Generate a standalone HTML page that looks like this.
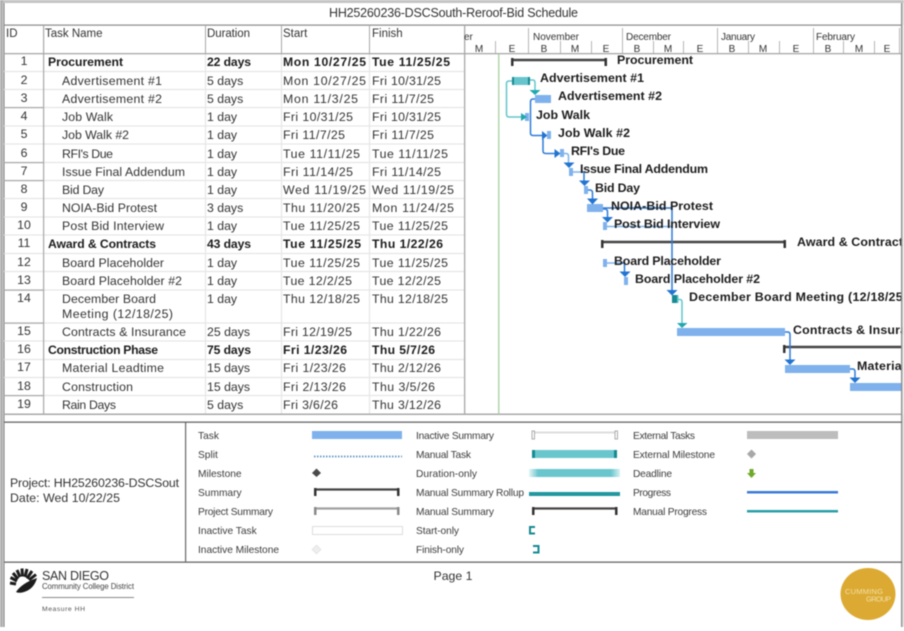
<!DOCTYPE html>
<html><head><meta charset="utf-8"><style>
html,body{margin:0;padding:0;background:#fff;width:904px;height:631px;overflow:hidden}
svg{position:absolute;left:0;top:0;filter:blur(.45px)}
text{font-family:"Liberation Sans",sans-serif;font-size:12.3px;fill:#333}
.b{font-weight:bold;fill:#1c1c1c;font-size:12.2px}
.l{font-weight:bold;fill:#1c1c1c;font-size:12.4px}
.h{font-size:11.5px}
.g{font-size:10.2px;fill:#3c3c3c}
.m{font-size:10px}
.c{text-anchor:middle}
.t{fill:none;stroke:#2f7bd8;stroke-width:1.5}
.t2{fill:none;stroke:#63c5cc;stroke-width:1.5}
.lb{fill:none;stroke:#7fb2ec;stroke-width:1.5}
.bar{fill:#7fb2ec}
.ar{fill:#2274d2}
.ar2{fill:#21a8ae}
.s{stroke:#444;stroke-width:2.5}
.cap{fill:#333}
.gl{stroke:#e6e6e6;stroke-width:1.2}
</style></head><body>
<svg width="904" height="631" viewBox="0 0 904 631" xmlns="http://www.w3.org/2000/svg">
<!-- outer -->
<rect x="0" y="0" width="904" height="3" fill="#c4c4c4"/>
<rect x="0" y="0" width="3" height="627" fill="#b0b0b0"/>
<rect x="3.5" y="3" width="1" height="624" fill="#777"/>
<rect x="901" y="3" width="1.3" height="624" fill="#888"/>
<rect x="902.3" y="3" width="1.7" height="624" fill="#d8d8d8"/>
<text x="329" y="17" style="font-size:12.5px" textLength="249">HH25260236-DSCSouth-Reroof-Bid Schedule</text>
<rect x="4" y="24.5" width="898" height="1.2" fill="#8a8a8a"/>
<!-- table grid -->
<g class="gl">
<line x1="4" x2="464" y1="71.5" y2="71.5"/><line x1="4" x2="464" y1="89.5" y2="89.5"/><line x1="4" x2="464" y1="107.5" y2="107.5"/>
<line x1="4" x2="464" y1="126" y2="126"/><line x1="4" x2="464" y1="144" y2="144"/><line x1="4" x2="464" y1="162.5" y2="162.5"/>
<line x1="4" x2="464" y1="180.5" y2="180.5"/><line x1="4" x2="464" y1="198.5" y2="198.5"/><line x1="4" x2="464" y1="217" y2="217"/>
<line x1="4" x2="464" y1="235" y2="235"/><line x1="4" x2="464" y1="253.5" y2="253.5"/><line x1="4" x2="464" y1="271.5" y2="271.5"/>
<line x1="4" x2="464" y1="290" y2="290"/><line x1="4" x2="464" y1="323" y2="323"/><line x1="4" x2="464" y1="341" y2="341"/>
<line x1="4" x2="464" y1="359.5" y2="359.5"/><line x1="4" x2="464" y1="377.5" y2="377.5"/><line x1="4" x2="464" y1="395.5" y2="395.5"/>
<line x1="205.5" x2="205.5" y1="53" y2="414"/><line x1="281.5" x2="281.5" y1="53" y2="414"/><line x1="369.5" x2="369.5" y1="53" y2="414"/>
</g>
<g fill="#a8a8a8">
<rect x="4" y="53" width="898" height="1.3"/>
<rect x="4" y="107" width="39" height="1.2"/><rect x="4" y="162" width="39" height="1.2"/><rect x="4" y="180" width="39" height="1.2"/><rect x="4" y="289.5" width="39" height="1.2"/><rect x="4" y="322.5" width="39" height="1.2"/><rect x="4" y="395" width="39" height="1.2"/>
<rect x="43" y="25" width="1.2" height="389"/>
<rect x="205" y="25" width="1" height="28"/><rect x="281" y="25" width="1" height="28"/><rect x="369" y="25" width="1" height="28"/>
<rect x="464" y="25" width="1.3" height="389"/>
<rect x="4" y="413.5" width="898" height="1.5"/>
</g>
<text x="6" y="37" class="h">ID</text><text x="45" y="37" class="h">Task Name</text><text x="207" y="37" class="h" textLength="43">Duration</text><text x="283" y="37" class="h">Start</text><text x="372" y="37" class="h">Finish</text>

<g>
<text class="c" x="24" y="65">1</text><text class="c" x="24" y="84">2</text><text class="c" x="24" y="102">3</text><text class="c" x="24" y="120">4</text><text class="c" x="24" y="138">5</text><text class="c" x="24" y="157">6</text><text class="c" x="24" y="175">7</text><text class="c" x="24" y="193">8</text><text class="c" x="24" y="211">9</text><text class="c" x="24" y="229">10</text><text class="c" x="24" y="247">11</text><text class="c" x="24" y="266">12</text><text class="c" x="24" y="284">13</text><text class="c" x="24" y="302">14</text><text class="c" x="24" y="335">15</text><text class="c" x="24" y="353">16</text><text class="c" x="24" y="371">17</text><text class="c" x="24" y="390">18</text><text class="c" x="24" y="408">19</text>
</g>
<text x="48" y="66" class="b" textLength="75">Procurement</text><text x="207" y="66" class="b" textLength="44">22 days</text><text x="283" y="66" class="b" textLength="83">Mon 10/27/25</text><text x="372" y="66" class="b" textLength="78">Tue 11/25/25</text>
<text x="62" y="85" textLength="100">Advertisement #1</text><text x="207" y="85">5 days</text><text x="283" y="85" textLength="83">Mon 10/27/25</text><text x="372" y="85" textLength="69">Fri 10/31/25</text>
<text x="62" y="103" textLength="100">Advertisement #2</text><text x="207" y="103">5 days</text><text x="283" y="103" textLength="75">Mon 11/3/25</text><text x="372" y="103" textLength="62">Fri 11/7/25</text>
<text x="62" y="121" textLength="51">Job Walk</text><text x="207" y="121">1 day</text><text x="283" y="121" textLength="70">Fri 10/31/25</text><text x="372" y="121" textLength="69">Fri 10/31/25</text>
<text x="62" y="139" textLength="67">Job Walk #2</text><text x="207" y="139">1 day</text><text x="283" y="139" textLength="62">Fri 11/7/25</text><text x="372" y="139" textLength="62">Fri 11/7/25</text>
<text x="62" y="158" textLength="51">RFI's Due</text><text x="207" y="158">1 day</text><text x="283" y="158" textLength="77">Tue 11/11/25</text><text x="372" y="158" textLength="76">Tue 11/11/25</text>
<text x="62" y="176" textLength="123">Issue Final Addendum</text><text x="207" y="176">1 day</text><text x="283" y="176" textLength="70">Fri 11/14/25</text><text x="372" y="176" textLength="69">Fri 11/14/25</text>
<text x="62" y="194" textLength="42">Bid Day</text><text x="207" y="194">1 day</text><text x="283" y="194" textLength="83">Wed 11/19/25</text><text x="372" y="194" textLength="82">Wed 11/19/25</text>
<text x="62" y="212" textLength="95">NOIA-Bid Protest</text><text x="207" y="212">3 days</text><text x="283" y="212" textLength="77">Thu 11/20/25</text><text x="372" y="212" textLength="82">Mon 11/24/25</text>
<text x="62" y="230" textLength="102">Post Bid Interview</text><text x="207" y="230">1 day</text><text x="283" y="230" textLength="77">Tue 11/25/25</text><text x="372" y="230" textLength="76">Tue 11/25/25</text>
<text x="48" y="248" class="b" textLength="108">Award &amp; Contracts</text><text x="207" y="248" class="b" textLength="44">43 days</text><text x="283" y="248" class="b" textLength="78">Tue 11/25/25</text><text x="372" y="248" class="b" textLength="71">Thu 1/22/26</text>
<text x="62" y="267" textLength="102">Board Placeholder</text><text x="207" y="267">1 day</text><text x="283" y="267" textLength="77">Tue 11/25/25</text><text x="372" y="267" textLength="76">Tue 11/25/25</text>
<text x="62" y="285" textLength="120">Board Placeholder #2</text><text x="207" y="285">1 day</text><text x="283" y="285" textLength="69">Tue 12/2/25</text><text x="372" y="285" textLength="69">Tue 12/2/25</text>
<text x="62" y="303" textLength="94">December Board</text><text x="207" y="303">1 day</text><text x="283" y="303" textLength="77">Thu 12/18/25</text><text x="372" y="303" textLength="76">Thu 12/18/25</text>
<text x="62" y="318" textLength="111">Meeting (12/18/25)</text>
<text x="62" y="336" textLength="124">Contracts &amp; Insurance</text><text x="207" y="336">25 days</text><text x="283" y="336" textLength="69">Fri 12/19/25</text><text x="372" y="336" textLength="69">Thu 1/22/26</text>
<text x="48" y="354" class="b" textLength="110">Construction Phase</text><text x="207" y="354" class="b" textLength="44">75 days</text><text x="283" y="354" class="b" textLength="64">Fri 1/23/26</text><text x="372" y="354" class="b" textLength="63">Thu 5/7/26</text>
<text x="62" y="372" textLength="102">Material Leadtime</text><text x="207" y="372">15 days</text><text x="283" y="372" textLength="63">Fri 1/23/26</text><text x="372" y="372" textLength="69">Thu 2/12/26</text>
<text x="62" y="391" textLength="71">Construction</text><text x="207" y="391">15 days</text><text x="283" y="391" textLength="63">Fri 2/13/26</text><text x="372" y="391" textLength="63">Thu 3/5/26</text>
<text x="62" y="409" textLength="54">Rain Days</text><text x="207" y="409">5 days</text><text x="283" y="409" textLength="55">Fri 3/6/26</text><text x="372" y="409" textLength="69">Thu 3/12/26</text>

<!-- timescale -->
<g fill="#b5b5b5">
<rect x="528" y="28" width="1" height="25"/><rect x="622" y="28" width="1" height="25"/><rect x="717" y="28" width="1" height="25"/><rect x="813" y="28" width="1" height="25"/><rect x="899" y="28" width="1" height="25"/>
<rect x="495" y="41" width="1" height="12"/><rect x="560" y="41" width="1" height="12"/><rect x="591" y="41" width="1" height="12"/><rect x="653" y="41" width="1" height="12"/><rect x="683" y="41" width="1" height="12"/><rect x="748" y="41" width="1" height="12"/><rect x="779" y="41" width="1" height="12"/><rect x="843" y="41" width="1" height="12"/><rect x="874" y="41" width="1" height="12"/>
</g>
<text x="464" y="40" class="m">er</text><text x="533" y="40" class="m" textLength="46">November</text><text x="626" y="40" class="m" textLength="45">December</text><text x="721" y="40" class="m" textLength="34">January</text><text x="816" y="40" class="m" textLength="39">February</text>
<text x="479" y="52" class="m c">M</text><text x="512" y="52" class="m c">E</text><text x="544" y="52" class="m c">B</text><text x="575" y="52" class="m c">M</text><text x="606" y="52" class="m c">E</text><text x="637" y="52" class="m c">B</text><text x="668" y="52" class="m c">M</text><text x="700" y="52" class="m c">E</text><text x="732" y="52" class="m c">B</text><text x="763" y="52" class="m c">M</text><text x="796" y="52" class="m c">E</text><text x="828" y="52" class="m c">B</text><text x="859" y="52" class="m c">M</text><text x="887" y="52" class="m c">E</text>
<rect x="498" y="54" width="1.5" height="360" fill="#b2d6ac"/>

<!-- bars -->
<rect x="535" y="95" width="16" height="8" class="bar"/>
<rect x="525" y="113" width="4" height="8" class="bar"/>
<rect x="547" y="131" width="4" height="8" class="bar"/>
<rect x="560" y="149" width="4" height="8" class="bar"/>
<rect x="569" y="168" width="4" height="8" class="bar"/>
<rect x="584" y="186" width="4" height="8" class="bar"/>
<rect x="587" y="204" width="16" height="8" class="bar"/>
<rect x="603" y="222" width="4" height="8" class="bar"/>
<rect x="603" y="259" width="4" height="8" class="bar"/>
<rect x="624" y="277" width="4" height="8" class="bar"/>
<rect x="677" y="328" width="108" height="8" class="bar"/>
<rect x="785" y="365" width="65" height="8" class="bar"/>
<rect x="850" y="383" width="51" height="8" class="bar"/>
<rect x="512" y="77" width="18" height="8" fill="#66c5cc"/><rect x="512" y="77" width="2" height="8" fill="#178a92"/><rect x="528" y="77" width="2" height="8" fill="#178a92"/>
<rect x="672" y="295" width="6" height="8" fill="#178a92"/><rect x="677" y="295" width="1.5" height="8" fill="#66c5cc"/>
<!-- summaries -->
<line x1="512" x2="606" y1="60" y2="60" class="s"/><rect x="511" y="58" width="2.5" height="8" class="cap"/><rect x="604.5" y="58" width="2.5" height="8" class="cap"/>
<line x1="602" x2="785" y1="242" y2="242" class="s"/><rect x="601" y="240" width="2.5" height="8" class="cap"/><rect x="783.5" y="240" width="2.5" height="8" class="cap"/>
<line x1="784" x2="901" y1="347" y2="347" class="s"/><rect x="783" y="345" width="2.5" height="8" class="cap"/>
<!-- connectors -->
<path class="t2" d="M512 81H509Q506.500 81 506.500 83.500V114Q506.500 117 509 117H522"/>
<path class="ar2" d="M521 113L527 117L521 121Z"/>
<path class="t2" d="M530 80H533Q535 80 535 83V91"/>
<path class="ar2" d="M529.500 90H540.500L535 95Z"/>
<path class="t" d="M535 99H533Q530.500 99 530.500 102V133Q530.500 135.500 533 135.500H542"/>
<path class="ar" d="M542 131L547.500 135.500L542 140Z"/>
<path class="t" d="M543 139V151Q543 153.500 546 153.500H555"/>
<path class="ar" d="M554.500 149L560.500 153.500L554.500 158Z"/>
<path class="lb" d="M564 153.500H566Q568.500 153.500 568.500 156V164"/>
<path class="ar" d="M563.500 162.500H574.500L569 168Z"/>
<path class="lb" d="M573 172H582"/><path class="t" d="M582 172H584V182"/>
<path class="ar" d="M579 180.500H590L584.500 186Z"/>
<path class="t" d="M588 190H590Q592.500 190 592.500 193V200"/>
<path class="ar" d="M587 198.500H598L592.500 204.500Z"/>
<path class="t" d="M603 208H672V292"/>
<path class="ar" d="M666.500 290H677.500L672 295.500Z"/>
<path class="t" d="M603 209H605Q607.500 209 607.500 212V219"/>
<path class="ar" d="M602 217H613L607.500 222.500Z"/>
<path class="lb" d="M607 226.500H671"/>
<path class="lb" d="M607 263H621"/><path class="t" d="M621 263H624.500V273"/>
<path class="ar" d="M619.500 271.500H630.500L625 277Z"/>
<path class="t2" d="M678 299.500H680Q682 299.500 682 302V324"/>
<path class="ar2" d="M677 323H687.500L682 328Z"/>
<path class="t" d="M785 332H788Q790 332 790 335V361"/>
<path class="ar" d="M784.500 359.500H795.500L790 365Z"/>
<path class="t" d="M850 369H853Q855 369 855 372V379"/>
<path class="ar" d="M849.500 377.500H860.500L855 383Z"/>
<!-- bar labels -->
<text x="617" y="64" class="l" textLength="76">Procurement</text>
<text x="540" y="82" class="l" textLength="104">Advertisement #1</text>
<text x="558" y="100" class="l" textLength="104">Advertisement #2</text>
<text x="536" y="119" class="l" textLength="54">Job Walk</text>
<text x="558" y="137" class="l" textLength="72">Job Walk #2</text>
<text x="571" y="155" class="l" textLength="54">RFI's Due</text>
<text x="580" y="173" class="l" textLength="128">Issue Final Addendum</text>
<text x="595" y="192" class="l" textLength="45">Bid Day</text>
<text x="611" y="210" class="l" textLength="102">NOIA-Bid Protest</text>
<text x="614" y="228" class="l" textLength="106">Post Bid Interview</text>
<text x="797" y="246" class="l" textLength="113">Award &amp; Contracts</text>
<text x="614" y="265" class="l" textLength="107">Board Placeholder</text>
<text x="635" y="283" class="l" textLength="125">Board Placeholder #2</text>
<text x="689" y="301" class="l" textLength="218">December Board Meeting (12/18/25)</text>
<text x="793" y="334" class="l" textLength="136">Contracts &amp; Insurance</text>
<text x="857" y="370" class="l" textLength="108">Material Leadtime</text>
<rect x="901" y="25" width="1.3" height="390" fill="#888"/><rect x="902.300" y="25" width="1.700" height="390" fill="#e2e2e2"/>

<!-- legend -->
<rect x="4" y="421.500" width="898" height="1.300" fill="#666"/>
<rect x="4" y="561.500" width="898" height="1.300" fill="#666"/>
<rect x="185" y="422" width="1.200" height="140" fill="#666"/>
<text x="10" y="487" style="font-size:12.300px" textLength="169">Project: HH25260236-DSCSout</text>
<text x="10" y="502" style="font-size:12.300px" textLength="110">Date: Wed 10/22/25</text>
<text class="g" x="198" y="439">Task</text><text class="g" x="198" y="458">Split</text><text class="g" x="198" y="477">Milestone</text><text class="g" x="198" y="496">Summary</text><text class="g" x="198" y="515" textLength="75">Project Summary</text><text class="g" x="198" y="534">Inactive Task</text><text class="g" x="198" y="553" textLength="81">Inactive Milestone</text>
<text class="g" x="416" y="439" textLength="78">Inactive Summary</text><text class="g" x="416" y="458" textLength="55">Manual Task</text><text class="g" x="416" y="477" textLength="61">Duration-only</text><text class="g" x="416" y="496" textLength="108">Manual Summary Rollup</text><text class="g" x="416" y="515" textLength="78">Manual Summary</text><text class="g" x="416" y="534" textLength="43">Start-only</text><text class="g" x="416" y="553" textLength="48">Finish-only</text>
<text class="g" x="633" y="439" textLength="62">External Tasks</text><text class="g" x="633" y="458" textLength="82">External Milestone</text><text class="g" x="633" y="477" textLength="39">Deadline</text><text class="g" x="633" y="496" textLength="38">Progress</text><text class="g" x="633" y="515" textLength="74">Manual Progress</text>
<rect x="312" y="431" width="90" height="8" fill="#7fb2ec"/>
<line x1="314" x2="402" y1="456.500" y2="456.500" stroke="#5b93c4" stroke-width="1.800" stroke-dasharray="1.500 1.500"/>
<path d="M316.500 468.500L321 473L316.500 477L312 473Z" fill="#4a4a4a"/>
<line x1="315" x2="398" y1="489.500" y2="489.500" stroke="#444" stroke-width="2.200"/><rect x="314" y="488" width="2.500" height="8" fill="#333"/><rect x="397" y="488" width="2.500" height="8" fill="#333"/>
<line x1="315" x2="398" y1="508.500" y2="508.500" stroke="#a0a0a0" stroke-width="2.200"/><rect x="314" y="507" width="2.500" height="8" fill="#8a8a8a"/><rect x="397" y="507" width="2.500" height="8" fill="#8a8a8a"/>
<rect x="312.500" y="526.500" width="90" height="8" fill="#fff" stroke="#ddd"/>
<path d="M316.500 545L321 549.500L316.500 554L312 549.500Z" fill="#eee" stroke="#ddd" stroke-width=".6"/>
<line x1="533" x2="616" y1="432.500" y2="432.500" stroke="#ddd" stroke-width="2"/><rect x="532" y="431" width="2.500" height="8" fill="#fff" stroke="#999" stroke-width=".8"/><rect x="615" y="431" width="2.500" height="8" fill="#fff" stroke="#999" stroke-width=".8"/>
<rect x="532" y="450" width="85" height="8" fill="#6ac6cd"/><rect x="532" y="450" width="3" height="8" fill="#178a92"/><rect x="614" y="450" width="3" height="8" fill="#178a92"/>
<defs><linearGradient id="d"><stop offset="0" stop-color="#e6f5f6"/><stop offset=".1" stop-color="#6ac6cd"/><stop offset=".9" stop-color="#6ac6cd"/><stop offset="1" stop-color="#d8f1f3"/></linearGradient></defs>
<rect x="529" y="469" width="91" height="8" fill="url(#d)"/>
<rect x="529" y="492" width="91" height="4" fill="#21979f"/>
<line x1="533" x2="616" y1="508.500" y2="508.500" stroke="#444" stroke-width="2.200"/><rect x="532" y="507" width="2.500" height="8" fill="#333"/><rect x="615" y="507" width="2.500" height="8" fill="#333"/>
<path d="M535 527H530V533.500H535" fill="none" stroke="#178a92" stroke-width="2"/>
<path d="M533 546H538.500V552.500H533" fill="none" stroke="#178a92" stroke-width="2"/>
<rect x="747" y="431" width="91" height="8" fill="#bdbdbd"/>
<path d="M751.500 449.500L756 454L751.500 458.500L747 454Z" fill="#a8a8a8" stroke="#ccc" stroke-width=".5"/>
<path d="M749.500 469H753.500V473H756L751.500 478L747 473H749.500Z" fill="#6fa82a"/>
<rect x="747" y="491" width="91" height="2.500" fill="#3d7ad6"/>
<rect x="747" y="510" width="91" height="2.500" fill="#2a9fa8"/>

<!-- footer -->
<text x="453" y="580" class="c" style="font-size:12.300px">Page 1</text>
<g fill="none" stroke="#1c1c1c" stroke-width="3">
<path d="M16 584L10 583M17 581L10.500 577.500M18 579L13 573M20 577L17 570M22.500 576.500L22 568.500M25 577L27 569M27 578.500L32 571M29 580L36 574.500"/>
</g>
<path d="M16 592Q22 583 37 578Q34 589 24 592Q19 593.500 16 592Z" fill="#1c1c1c"/>
<text x="42" y="580" style="font-size:12.500px;fill:#333" textLength="67">SAN DIEGO</text>
<text x="42" y="589" style="font-size:7.800px;fill:#444" textLength="92">Community College District</text>
<rect x="42" y="597" width="92" height="1" fill="#8a8a8a"/>
<text x="42" y="611" style="font-size:6.800px;fill:#555" textLength="43">Measure HH</text>
<rect x="3.500" y="562" width="1" height="65" fill="#777"/>
<ellipse cx="868" cy="594" rx="27.500" ry="26" fill="#dcaa32"/>
<text x="845" y="594" style="font-size:7.500px;fill:#f3dfa8" textLength="38">CUMMING</text>
<text x="866" y="601.500" style="font-size:7.500px;fill:#f3dfa8" textLength="25">GROUP</text>
</svg>
</body></html>
